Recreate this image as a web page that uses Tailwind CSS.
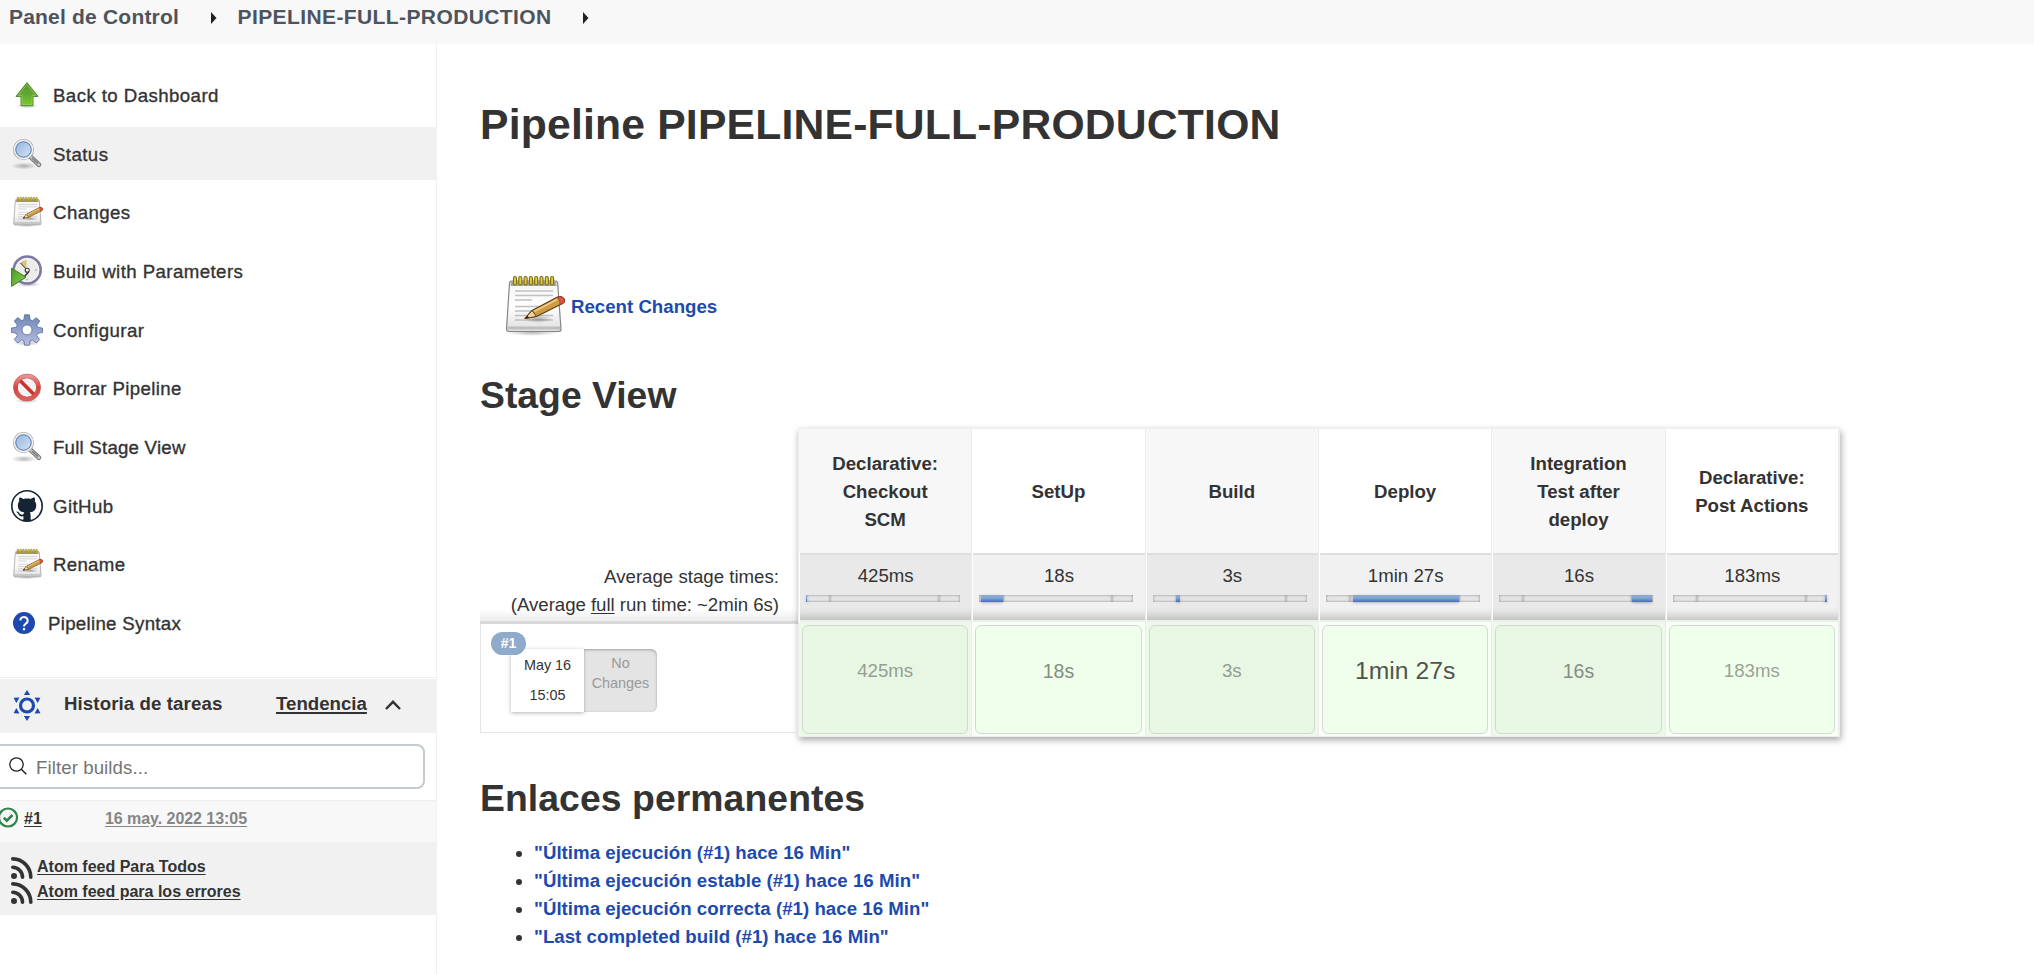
<!DOCTYPE html>
<html lang="es">
<head>
<meta charset="utf-8">
<title>PIPELINE-FULL-PRODUCTION [Jenkins]</title>
<script src="https://cdn.jsdelivr.net/npm/@tailwindcss/browser@4"></script>
</head>
<body class="h-[974px] w-[2034px] overflow-hidden bg-white font-['Liberation_Sans',Arial,sans-serif] text-[18.67px] leading-7 text-[#333]">

<svg class="absolute size-0">
  <defs>
    <linearGradient id="g-up" x1="0" y1="0" x2="0" y2="1"><stop offset="0" stop-color="#5a9a2c"/><stop offset=".5" stop-color="#62a632"/><stop offset="1" stop-color="#7acb2a"/></linearGradient>
    <linearGradient id="g-lens" x1="0" y1="0" x2="1" y2="1"><stop offset="0" stop-color="#8fb1de"/><stop offset="1" stop-color="#dbe8f7"/></linearGradient>
    <linearGradient id="g-page" x1="0" y1="0" x2="0" y2="1"><stop offset="0" stop-color="#f4f4f4"/><stop offset=".5" stop-color="#fff"/><stop offset="1" stop-color="#dedede"/></linearGradient>
    <linearGradient id="g-gear" x1="0" y1="0" x2="0" y2="1"><stop offset="0" stop-color="#6c86b4"/><stop offset="1" stop-color="#b9bfe3"/></linearGradient>
    <linearGradient id="g-stop" x1="0" y1="0" x2="0" y2="1"><stop offset="0" stop-color="#e79191"/><stop offset=".5" stop-color="#d64540"/><stop offset="1" stop-color="#dc5f5a"/></linearGradient>
    <linearGradient id="g-play" x1="0" y1="0" x2="1" y2="1"><stop offset="0" stop-color="#4b9a22"/><stop offset="1" stop-color="#8bd05a"/></linearGradient>
    <radialGradient id="g-shadow"><stop offset="0" stop-color="#000" stop-opacity=".28"/><stop offset="1" stop-color="#000" stop-opacity="0"/></radialGradient>
  </defs>
  <symbol id="i-up" viewBox="0 0 32 32">
    <ellipse cx="16" cy="27" rx="11" ry="2.500" fill="url(#g-shadow)"/>
    <path d="M16 3.600 27 17.400H22V26.600H10V17.400H5Z" fill="url(#g-up)" stroke="#4c8a20" stroke-width="1" stroke-linejoin="round"/>
    <path d="M16 5.400 25 16.400H21V25.600H11V16.400H7Z" fill="none" stroke="#a9d67f" stroke-width=".8" opacity=".7"/>
  </symbol>
  <symbol id="i-search" viewBox="0 0 32 32">
    <ellipse cx="13" cy="28" rx="13" ry="3.500" fill="url(#g-shadow)"/>
    <path d="M20 19.300 28 26.800" stroke="#757575" stroke-width="4.600" stroke-linecap="round"/>
    <path d="M20 19.300 28 26.800" stroke="#c8c8c8" stroke-width="2.600" stroke-linecap="round"/>
    <path d="M21 20 27 25.700" stroke="#808080" stroke-width="1.600"/>
    <circle cx="12.500" cy="11.500" r="9" fill="url(#g-lens)" stroke="#9c9c9c" stroke-width="3"/>
    <circle cx="12.500" cy="11.500" r="9" fill="none" stroke="#f0f0f0" stroke-width="1.800"/>
    <circle cx="12.500" cy="11.500" r="7.700" fill="none" stroke="#6285bd" stroke-width="1"/>
  </symbol>
  <symbol id="i-note" viewBox="0 0 64 64">
    <ellipse cx="31" cy="58.500" rx="27" ry="3.500" fill="url(#g-shadow)"/>
    <path d="M10.500 7h44q2 0 2.200 2.500L60 55.500q0 2-2.500 2H8q-2.500 0-2.500-2.500L8.500 9.500Q8.500 7 10.500 7Z" fill="url(#g-page)" stroke="#858585" stroke-width="1.200"/>
    <path d="M10 7.500h45l.5 4.500h-46Z" fill="#a5a49c"/>
    <path d="M6.500 52.500h52.500v3H6.500Z" fill="#bdbfbd"/>
    <path d="M14 17h38M14 21.500h38M14 26h17M14 32.500h35M14 37h32M14 41.500h38M14 46h38" stroke="#c0c0c0" stroke-width="1.300"/>
    <g fill="#e3cd3e" stroke="#7c6b16" stroke-width="1.100">
      <rect x="12.500" y="2.500" width="3" height="8.500" rx="1.500"/><rect x="17.800" y="2.500" width="3" height="8.500" rx="1.500"/><rect x="23.100" y="2.500" width="3" height="8.500" rx="1.500"/><rect x="28.400" y="2.500" width="3" height="8.500" rx="1.500"/><rect x="33.700" y="2.500" width="3" height="8.500" rx="1.500"/><rect x="39" y="2.500" width="3" height="8.500" rx="1.500"/><rect x="44.300" y="2.500" width="3" height="8.500" rx="1.500"/><rect x="49.600" y="2.500" width="3" height="8.500" rx="1.500"/>
    </g>
    <ellipse cx="37" cy="45" rx="14" ry="4" fill="url(#g-shadow)"/>
    <path d="M24 44.500 31 36.500 56.500 23Q60.500 21.500 62.800 24.500T61.500 29.500L35.500 42.500Z" fill="#cf9a45" stroke="#5e3d12" stroke-width="1.200" stroke-linejoin="round"/>
    <path d="M33 37.500 56 25.500" stroke="#efcb85" stroke-width="1.800"/>
    <path d="M24 44.500 31 36.500l2 2.500 2.500 3.500Z" fill="#ecd3a0" stroke="#5e3d12" stroke-width="1"/>
    <path d="m24 44.500 2.500-2.900 1.500 2.100Z" fill="#3c2a10"/>
    <path d="M56.500 23Q60.500 21.500 62.800 24.500T61.500 29.500l-2.400 1.200Q59.500 26 56.500 23Z" fill="#e5524c" stroke="#8f3a2c" stroke-width=".8"/>
  </symbol>
  <symbol id="i-clock" viewBox="0 0 32 32">
    <ellipse cx="17" cy="29.500" rx="13" ry="2.500" fill="url(#g-shadow)"/>
    <circle cx="16.200" cy="15" r="13.400" fill="#ececea" stroke="#7d7ba3" stroke-width="2.800"/>
    <circle cx="16.200" cy="15" r="11.700" fill="none" stroke="#fff" stroke-width=".8"/>
    <path d="M15.500 14V5.200Q12 5.400 9.300 7.800Z" fill="#dcc078"/>
    <path d="M9.500 8 15.500 14.500" stroke="#333" stroke-width="1"/>
    <path d="M17.500 17 13.500 21.500" stroke="#333" stroke-width="1.500" fill="none"/>
    <circle cx="16.200" cy="15.200" r="2" fill="#fff" stroke="#333" stroke-width="1.100"/>
    <circle cx="25" cy="15" r="1" fill="#b9b9b9"/><circle cx="16" cy="24.500" r="1" fill="#b9b9b9"/>
    <path d="M.6 13.200 15 22.200.6 31.400Z" fill="url(#g-play)" stroke="#3c7d1b" stroke-width="1"/>
  </symbol>
  <symbol id="i-gear" viewBox="0 0 32 32">
    <ellipse cx="16" cy="29" rx="13" ry="3" fill="url(#g-shadow)"/>
    <path d="M13.600.8h4.800l.7 5 2.300 1 4-3.100 3.400 3.400-3 4 1 2.300 4.700.7v4.400l-4.800.8-1 2.300 3 4-3.400 3.400-4-3-2.300 1-.6 4.200h-4.800l-.7-4.300-2.200-1-4 3.100-3.400-3.400 3-4-1-2.300L.5 18.400v-4.300l4.800-.8 1-2.300-3-4 3.400-3.400 4 3 2.200-.9ZM16 10.900a5 5 0 1 0 0 10 5 5 0 1 0 0-10Z" fill="url(#g-gear)" fill-rule="evenodd" stroke="#66759f" stroke-width=".9" stroke-linejoin="round"/>
  </symbol>
  <symbol id="i-stop" viewBox="0 0 32 32">
    <ellipse cx="16" cy="28.700" rx="12" ry="2.500" fill="url(#g-shadow)"/>
    <circle cx="16" cy="15.500" r="11.500" fill="#f3f3f3" stroke="#c05550" stroke-width="4.600"/>
    <path d="m8 7.500 16 16" stroke="#c9342f" stroke-width="3.800"/>
    <circle cx="16" cy="15.500" r="11.500" fill="none" stroke="url(#g-stop)" stroke-width="3.600"/>
  </symbol>
  <symbol id="i-github" viewBox="0 0 32 32">
    <circle cx="16" cy="16" r="16" fill="#152433"/>
    <path transform="translate(1.600 1.600) scale(1.800)" fill="#fff" d="M8 0C3.580 0 0 3.580 0 8c0 3.540 2.290 6.530 5.470 7.590.4.070.55-.17.55-.38 0-.19-.01-.82-.01-1.490-2.010.37-2.530-.49-2.690-.94-.09-.23-.48-.94-.82-1.130-.28-.15-.68-.52-.01-.53.63-.01 1.080.58 1.230.82.72 1.210 1.870.87 2.330.66.070-.52.280-.87.510-1.070-1.780-.2-3.640-.89-3.640-3.950 0-.87.310-1.590.82-2.150-.08-.2-.36-1.020.08-2.120 0 0 .67-.21 2.200.82.640-.18 1.320-.27 2-.27.68 0 1.360.09 2 .27 1.530-1.040 2.200-.82 2.200-.82.44 1.100.16 1.920.08 2.120.510.56.82 1.270.82 2.150 0 3.070-1.870 3.750-3.650 3.950.290.250.540.730.540 1.480 0 1.070-.01 1.930-.01 2.200 0 .210.150.460.550.380A8.013 8.013 0 0 0 16 8c0-4.420-3.580-8-8-8z"/>
  </symbol>
  <symbol id="i-rss" viewBox="0 0 22 22">
    <circle cx="3" cy="19" r="3" fill="#333"/>
    <path d="M1.800 10.200A10 10 0 0 1 11.500 20.200M1.800 1.900A18.300 18.300 0 0 1 19.800 20.200" fill="none" stroke="#333" stroke-width="3.600" stroke-linecap="round"/>
  </symbol>
</svg>

<header class="flex h-[44px] items-start bg-[#f8f8f8] pl-[9px] text-[21px] font-bold leading-[34px] text-[#4d545d]">
  <span class="w-[202px] tracking-[0.200px]">Panel de Control</span>
  <svg class="mt-[12px] h-[12px] w-[6px]" viewBox="0 0 6 12"><path d="M0 0 5.500 6 0 12Z" fill="#222"/></svg>
  <span class="ml-[20.500px] w-[345.500px] tracking-[0.400px]">PIPELINE-FULL-PRODUCTION</span>
  <svg class="mt-[12px] h-[12px] w-[6px]" viewBox="0 0 6 12"><path d="M0 0 5.500 6 0 12Z" fill="#222"/></svg>
</header>

<div class="flex h-[930px]">
  <aside class="w-[437px] shrink-0 border-r border-[#f0f0f0] pt-[24.330px]">
    <nav class="flex h-[608.700px] flex-col gap-[5.340px] tracking-[0.420px] [-webkit-text-stroke:0.350px]">
      <a class="flex h-[53.330px] items-center gap-[10px] pl-[11px]"><svg class="size-8"><use href="#i-up"/></svg><span class="pt-[2px]">Back to Dashboard</span></a>
      <a class="flex h-[53.330px] items-center gap-[10px] bg-[#f1f1f1] pl-[11px]"><svg class="size-8"><use href="#i-search"/></svg><span class="pt-[2px]">Status</span></a>
      <a class="flex h-[53.330px] items-center gap-[10px] pl-[11px]"><svg class="size-8"><use href="#i-note"/></svg><span class="pt-[2px]">Changes</span></a>
      <a class="flex h-[53.330px] items-center gap-[10px] pl-[11px]"><svg class="size-8"><use href="#i-clock"/></svg><span class="pt-[2px]">Build with Parameters</span></a>
      <a class="flex h-[53.330px] items-center gap-[10px] pl-[11px]"><svg class="size-8"><use href="#i-gear"/></svg><span class="pt-[2px]">Configurar</span></a>
      <a class="flex h-[53.330px] items-center gap-[10px] pl-[11px]"><svg class="size-8"><use href="#i-stop"/></svg><span class="pt-[2px] tracking-[0.350px]">Borrar Pipeline</span></a>
      <a class="flex h-[53.330px] items-center gap-[10px] pl-[11px]"><svg class="size-8"><use href="#i-search"/></svg><span class="pt-[2px] tracking-[0.220px]">Full Stage View</span></a>
      <a class="flex h-[53.330px] items-center gap-[10px] pl-[11px]"><svg class="size-8"><use href="#i-github"/></svg><span class="pt-[2px]">GitHub</span></a>
      <a class="flex h-[53.330px] items-center gap-[10px] pl-[11px]"><svg class="size-8"><use href="#i-note"/></svg><span class="pt-[2px] tracking-[0.300px]">Rename</span></a>
      <a class="flex h-[53.330px] items-center gap-[13px] pl-[13px] pt-px"><svg class="size-[22px]" viewBox="0 0 22 22"><circle cx="11" cy="11" r="11" fill="#1d4aae"/><path d="M7.300 8.400a3.700 3.500 0 1 1 5.600 3.100c-1.200.8-1.900 1.400-1.900 2.900" fill="none" stroke="#fff" stroke-width="2.100"/><rect x="9.900" y="16" width="2.200" height="2.300" fill="#fff"/></svg><span class="pt-px tracking-[0.300px]">Pipeline Syntax</span></a>
    </nav>

    <section>
      <div class="border-t border-[#eee] pt-px">
        <div class="flex h-[54px] items-center bg-[#f1f1f1] pl-[12px] font-bold">
          <svg class="h-[32px] w-[30px]" viewBox="0 0 30 32"><circle cx="15" cy="15.500" r="6.500" fill="none" stroke="#1d4aae" stroke-width="3.200"/><g fill="#1d4aae"><path id="ray" d="M15 0 18.100 5H11.900Z"/><use href="#ray" transform="rotate(60 15 15.500)"/><use href="#ray" transform="rotate(120 15 15.500)"/><use href="#ray" transform="rotate(180 15 15.500)"/><use href="#ray" transform="rotate(240 15 15.500)"/><use href="#ray" transform="rotate(300 15 15.500)"/></g></svg>
          <span class="ml-[22px] w-[212px] pb-[4px] tracking-[0.100px]">Historia de tareas</span>
          <span class="w-[109px] pb-[4px] underline decoration-2 underline-offset-2">Tendencia</span>
          <svg class="-mt-[3px] h-[10px] w-[16px]" viewBox="0 0 16 10"><path d="m1 9 7-7.200L15 9" fill="none" stroke="#333" stroke-width="2.400"/></svg>
        </div>
      </div>
      <div class="-ml-[8px] mt-[11px] flex h-[45px] w-[433px] items-center rounded-lg border-2 border-[#c3cbd0] pl-[15px] text-[#757575]">
        <svg class="-mt-px h-[18px] w-[18px]" viewBox="0 0 18 18"><circle cx="7.500" cy="7.500" r="6.700" fill="none" stroke="#222" stroke-width="1.300"/><path d="m12.300 12.300 5 5" stroke="#222" stroke-width="1.400"/></svg>
        <span class="ml-[9px] pt-[2px] tracking-[0.080px]">Filter builds...</span>
      </div>
      <div class="mt-[11px] flex h-[42px] items-start border-t border-[#f0f0f0] bg-[#f8f8f8] pt-[6px] text-base font-bold">
        <svg class="-ml-[2px] h-[21px] w-[20px]" viewBox="0 0 20 21"><circle cx="10" cy="10.500" r="9" fill="none" stroke="#2d8548" stroke-width="2.200"/><path d="m5.800 10.800 3 2.900 5.700-5.700" fill="none" stroke="#2d8548" stroke-width="2.600"/></svg>
        <span class="ml-[6px] w-[81px] underline underline-offset-2">#1</span>
        <span class="tracking-[-0.050px] text-[#858585] underline underline-offset-2">16 may. 2022 13:05</span>
      </div>
      <div class="flex h-[73px] flex-col bg-[#f1f1f1] pl-[11px] pt-[12px] text-base font-bold leading-[25px]">
        <div class="flex h-[25px]"><svg class="mt-[3px] size-[22px]"><use href="#i-rss"/></svg><span class="ml-[4px] underline underline-offset-2">Atom feed Para Todos</span></div>
        <div class="flex h-[25px]"><svg class="mt-[3px] size-[22px]"><use href="#i-rss"/></svg><span class="ml-[4px] underline underline-offset-2">Atom feed para los errores</span></div>
      </div>
    </section>
  </aside>

  <main class="pl-[43px] pt-[54px]">
    <h1 class="h-[176px] text-[42.670px] font-bold leading-[52px] tracking-[0.200px]">Pipeline PIPELINE-FULL-PRODUCTION</h1>
    <a class="flex h-[64px] items-center pl-[21px] font-bold text-[#1d4aae]"><svg class="size-16"><use href="#i-note"/></svg><span class="ml-[6px] pt-[2px]">Recent Changes</span></a>
    <h2 class="mt-[35px] h-[55px] text-[37.330px] font-bold leading-[44px]">Stage View</h2>

    <div class="flex">
      <div class="w-[318px] pt-[126px]">
        <div class="h-[70px] border-b-[3px] border-[#d9d9d9] bg-linear-to-b from-white from-82% to-[#ededed] pr-[19px] pt-[9px] text-right">
          <p>Average stage times:</p>
          <p class="tracking-[-0.050px]">(Average <u class="underline-offset-2">full</u> run time: ~2min 6s)</p>
        </div>
        <div class="relative h-[109px] border-x border-b border-[#e4e4e4] pl-[30px] pt-[25px] text-[14.400px] leading-5">
          <span class="absolute left-[10px] top-[8px] z-10 h-[23px] w-[35px] rounded-full bg-[#8fabcc] text-center text-[14px] font-bold leading-[23px] text-white">#1</span>
          <div class="flex h-[63px] text-center">
            <div class="w-[73px] bg-white pt-[6px] shadow-[0_1px_4px_rgba(0,0,0,0.3)]"><p>May 16</p><p class="mt-[10px]">15:05</p></div>
            <div class="w-[73px] rounded-r-md bg-[#e4e4e4] pt-[4px] text-[#999] shadow-[inset_0_1px_3px_rgba(0,0,0,0.3)]">No<br>Changes</div>
          </div>
        </div>
      </div>

      <div id="stages" class="grid h-[309px] w-[1042px] grid-cols-6 border border-[#eee] bg-white shadow-[1px_3px_7px_rgba(0,0,0,0.35)]"></div>
    </div>

    <h2 class="mt-[38.500px] text-[37.330px] font-bold leading-[44px] tracking-[0.070px]">Enlaces permanentes</h2>
    <ul class="mt-[19px] list-disc pl-[54px] font-bold tracking-[0.030px]">
      <li><a class="text-[#1d4aae]">"Última ejecución (#1) hace 16 Min"</a></li>
      <li><a class="text-[#1d4aae]">"Última ejecución estable (#1) hace 16 Min"</a></li>
      <li><a class="text-[#1d4aae]">"Última ejecución correcta (#1) hace 16 Min"</a></li>
      <li><a class="text-[#1d4aae]">"Last completed build (#1) hace 16 Min"</a></li>
    </ul>
  </main>
</div>

<script>
// start/width: position of the stage's share of the run on its 154px track
const stages = [
  { name: "Declarative:<br>Checkout<br>SCM", time: "425ms", start: 0, width: 1, text: "text-[#949e92]" },
  { name: "SetUp", time: "18s", start: 2, width: 22, text: "text-[19.500px] text-[#848d82]" },
  { name: "Build", time: "3s", start: 23, width: 4, text: "text-[#929c90]" },
  { name: "Deploy", time: "1min 27s", start: 27, width: 106, text: "text-[24.700px] text-[#4f544d]" },
  { name: "Integration<br>Test after<br>deploy", time: "16s", start: 133, width: 20, text: "text-[19.500px] text-[#848d82]" },
  { name: "Declarative:<br>Post Actions", time: "183ms", start: 152, width: 2, text: "text-[#99a396]" },
];
document.getElementById("stages").innerHTML = stages.map((s, i) => {
  const odd = i % 2 === 0;
  return `<div class="flex min-w-0 flex-col border-r border-[#ececec]">
    <div class="flex h-[124px] items-center justify-center pt-[2px] text-center font-bold ${odd ? "bg-[#f7f7f7]" : "bg-white"}"><span>${s.name}</span></div>
    <div class="ml-px h-[69px] border-b-2 border-t-2 border-b-[#eee] border-t-[#dedede] pt-[7px] text-center shadow-[inset_0_-12px_10px_-8px_rgba(0,0,0,0.2)] ${odd ? "bg-[#e9e9e9]" : "bg-[#f1f1f1]"}">
      <p>${s.time}</p>
      <div class="relative ml-[6px] mt-[5px] flex h-[7px] w-[154px] bg-[#e6e6e6]">
        <i class="w-[24px] shadow-[inset_0_0_3px_rgba(0,0,0,0.4)]"></i><i class="w-[109px] shadow-[inset_0_0_3px_rgba(0,0,0,0.4)]"></i><i class="w-[21px] shadow-[inset_0_0_3px_rgba(0,0,0,0.4)]"></i>
        <b class="absolute inset-y-0 bg-linear-to-b from-[#88a9d0] from-40% to-[#4468cc] shadow-[0_1px_3px_rgba(0,0,0,0.25)]" style="left:${s.start}px;width:${s.width}px"></b>
      </div>
    </div>
    <div class="h-[114px] px-[3px] pt-[3px] ${odd ? "bg-[#eef8ea]" : "bg-[#f8fff4]"}">
      <div class="h-[109px] rounded-md border border-[#d3d8d0] pt-[31px] text-center ${odd ? "bg-[#e8f7e4]" : "bg-[#f0ffeb]"}"><p class="${s.text}">${s.time}</p></div>
    </div>
  </div>`;
}).join("");
</script>
</body>
</html>
